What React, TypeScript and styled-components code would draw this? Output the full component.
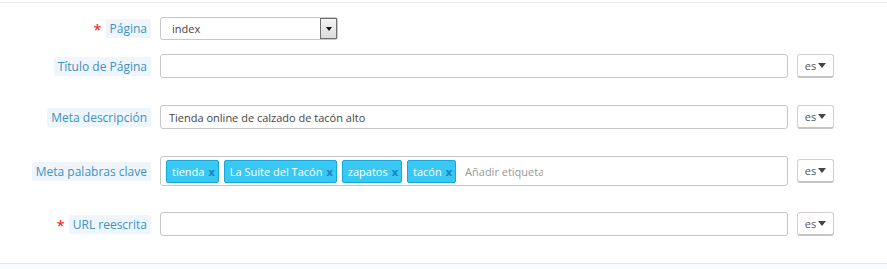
import React from "react"
import styled, { createGlobalStyle } from "styled-components"

const GlobalStyle = createGlobalStyle`
  body {
    margin: 0;
    background: #fff;
    font-family: "Open Sans", "Liberation Sans", sans-serif;
    font-size: 11px;
    color: #555;
  }
`

const Panel = styled.div`
  margin-top: 2px;
  border-top: 1px solid #eaeaea;
  border-bottom: 1px solid #e6e6e6;
  padding: 14px 0 0;
  background: #fff;
`

const Footer = styled.div`
  height: 5px;
  background: #fafbfc;
`

const Row = styled.div<{ $gap: number }>`
  display: flex;
  align-items: center;
  margin-bottom: ${(p) => p.$gap}px;
`

const LabelCol = styled.div`
  width: 151px;
  display: flex;
  justify-content: flex-end;
  align-items: center;
  flex-shrink: 0;
`

const Required = styled.span`
  color: #e11;
  font-size: 15px;
  margin-right: 4px;
  line-height: 1;
  position: relative;
  top: 1px;
`

const LabelText = styled.span`
  background: #eef6fb;
  color: #4290bd;
  font-size: 12px;
  line-height: 19px;
  padding: 0 4px;
  border-radius: 2px;
`

const Field = styled.div`
  margin-left: 9px;
  width: 628px;
  flex-shrink: 0;
`

const TextInput = styled.div`
  box-sizing: border-box;
  height: 24px;
  border: 1px solid #c7c7c7;
  border-radius: 3px;
  padding: 0 8px;
  display: flex;
  align-items: center;
  color: #444;
  font-size: 11px;
`

const Select = styled.div`
  box-sizing: border-box;
  width: 178px;
  height: 23px;
  border: 1px solid #c7c7c7;
  border-radius: 3px;
  display: flex;
  align-items: stretch;
  margin-left: 9px;
`

const SelectValue = styled.span`
  flex: 1;
  padding-left: 11px;
  display: flex;
  align-items: center;
  color: #444;
`

const SelectArrow = styled.span`
  width: 15px;
  border: 1px solid #707070;
  background: linear-gradient(#f4f4f4, #dcdcdc);
  display: flex;
  align-items: center;
  justify-content: center;
  &::after {
    content: "";
    border-left: 3.5px solid transparent;
    border-right: 3.5px solid transparent;
    border-top: 4px solid #111;
  }
`

const TagBox = styled.div`
  box-sizing: border-box;
  height: 30px;
  border: 1px solid #c7c7c7;
  border-radius: 3px;
  padding: 0 5px;
  display: flex;
  align-items: center;
  gap: 5px;
`

const Tag = styled.span`
  box-sizing: border-box;
  height: 23px;
  background: #37c8f4;
  border: 1px solid #1aa6d8;
  border-radius: 2px;
  color: #fff;
  padding: 0 3px 0 5px;
  display: flex;
  align-items: center;
  gap: 4px;
  font-size: 11px;
`

const TagRemove = styled.span`
  color: #1585bd;
  font-weight: bold;
  font-size: 11px;
`

const TagPlaceholder = styled.span`
  color: #999;
  margin-left: 4px;
  width: 78px;
  overflow: hidden;
  white-space: nowrap;
`

const LangButton = styled.div`
  box-sizing: border-box;
  margin-left: 9px;
  width: 37px;
  height: 24px;
  border: 1px solid #d0d0d0;
  border-bottom: 2px solid #c4c4c4;
  border-radius: 3px;
  display: flex;
  align-items: center;
  justify-content: center;
  gap: 2px;
  color: #555;
  font-size: 11px;
  &::after {
    content: "";
    border-left: 4px solid transparent;
    border-right: 4px solid transparent;
    border-top: 5px solid #444;
  }
`

const Label = ({ text, required }: { text: string; required?: boolean }) => (
  <LabelCol>
    {required && <Required>*</Required>}
    <LabelText>{text}</LabelText>
  </LabelCol>
)

const tags = ["tienda", "La Suite del Tacón", "zapatos", "tacón"]

const App = () => {
  return (
    <>
      <GlobalStyle />
      <Panel>
        <Row $gap={14}>
          <Label text="Página" required />
          <Select>
            <SelectValue>index</SelectValue>
            <SelectArrow />
          </Select>
        </Row>
        <Row $gap={27}>
          <Label text="Título de Página" />
          <Field>
            <TextInput />
          </Field>
          <LangButton>es</LangButton>
        </Row>
        <Row $gap={27}>
          <Label text="Meta descripción" />
          <Field>
            <TextInput>Tienda online de calzado de tacón alto</TextInput>
          </Field>
          <LangButton>es</LangButton>
        </Row>
        <Row $gap={26}>
          <Label text="Meta palabras clave" />
          <Field>
            <TagBox>
              {tags.map((t) => (
                <Tag key={t}>
                  {t}
                  <TagRemove>x</TagRemove>
                </Tag>
              ))}
              <TagPlaceholder>Añadir etiqueta</TagPlaceholder>
            </TagBox>
          </Field>
          <LangButton>es</LangButton>
        </Row>
        <Row $gap={27}>
          <Label text="URL reescrita" required />
          <Field>
            <TextInput />
          </Field>
          <LangButton>es</LangButton>
        </Row>
      </Panel>
      <Footer />
    </>
  )
}

export default App
